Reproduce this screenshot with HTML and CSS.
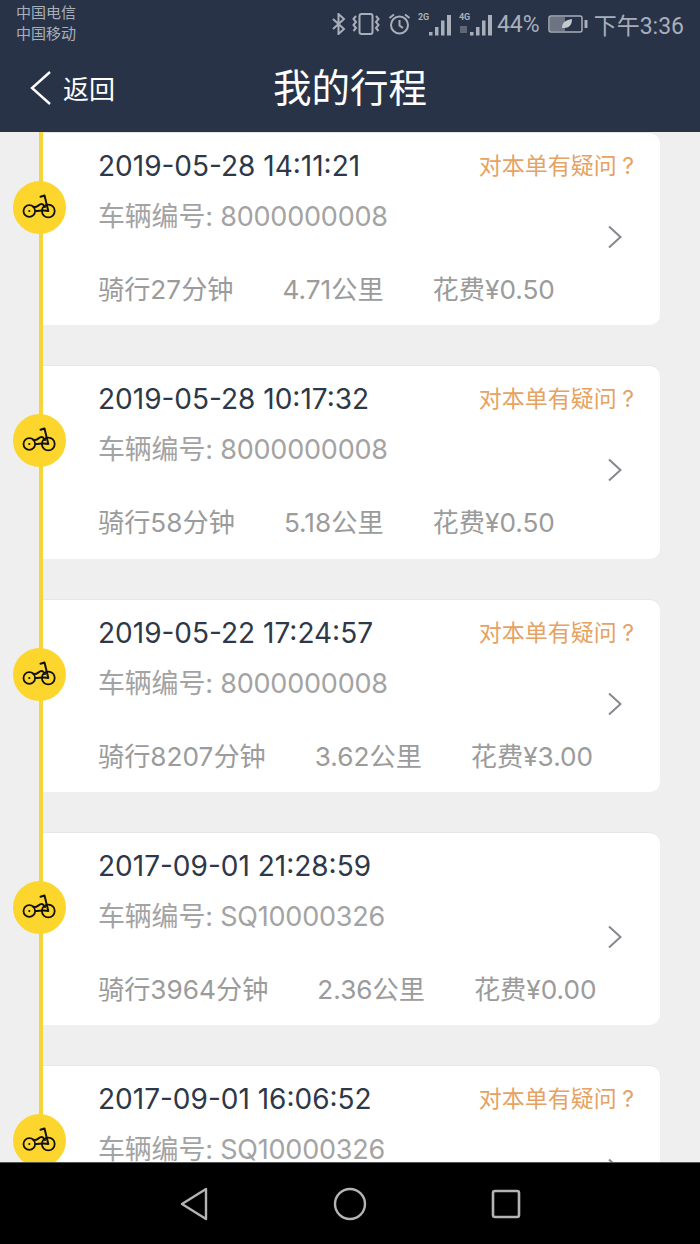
FILE: index.html
```html
<!DOCTYPE html>
<html lang="zh-CN">
<head>
<meta charset="utf-8">
<title>我的行程</title>
<link rel="stylesheet" href="styles.css">
</head>
<body>
<svg class="defs" width="0" height="0" aria-hidden="true">
  <symbol id="bike" viewBox="0 0 36 26">
    <circle cx="7.300" cy="18" r="5.800" fill="none" stroke="#111" stroke-width="1.800"/>
    <circle cx="7.300" cy="18" r="1.100" fill="#111"/>
    <circle cx="26.300" cy="18" r="6.400" fill="none" stroke="#111" stroke-width="1.800"/>
    <path d="M18.500 3.800 22.500 2.500 26.300 18M11 13.500c3.500 2.500 5.500-2.500 8.500-2.500 2 0 2.500 2 3.500 3M14 18c3 0 8-1.500 12.300 0" fill="none" stroke="#111" stroke-width="2" stroke-linecap="round" stroke-linejoin="round"/>
  </symbol>
  <symbol id="chev" viewBox="0 0 16 24">
    <path d="M2 1.500 13.500 12 2 22.500" fill="none" stroke="#85888d" stroke-width="2"/>
  </symbol>
</svg>
<div class="top">
  <div class="status">
    <div class="carriers"><span>中国电信</span><span>中国移动</span></div>
    <div class="sys">
      <svg class="ic-bt" width="14" height="22" viewBox="0 0 14 22"><path d="M1 6l11 10-5.500 5V1L12 6 1 16" fill="none" stroke="#a9afba" stroke-width="2"/></svg>
      <svg class="ic-vib" width="28" height="22" viewBox="0 0 28 22"><rect x="7.500" y="1" width="13" height="20" rx="2" fill="none" stroke="#a9afba" stroke-width="2"/><path d="M4 3 1.500 6 4 9 1.500 12 4 15 1.500 18M24 3l2.500 3L24 9l2.500 3L24 15l2.500 3" fill="none" stroke="#a9afba" stroke-width="2"/></svg>
      <svg class="ic-alarm" width="23" height="22" viewBox="0 0 23 22"><circle cx="11.500" cy="12" r="8.500" fill="none" stroke="#a9afba" stroke-width="2"/><path d="M11.500 7v5.500l3.500 2.500M1.500 5 6 1.500M21.500 5 17 1.500" fill="none" stroke="#a9afba" stroke-width="2"/></svg>
      <div class="sig"><span class="net">2G</span>
        <svg width="24" height="22" viewBox="0 0 24 22"><path d="M0 18h3.500v3.500H0zM6 13h3.500v8.500H6zM12 6.500h3.500v15H12zM18 1h4v20.500h-4z" fill="#a9afba"/></svg></div>
      <div class="sig sig-data"><span class="net">4G</span>
        <svg width="24" height="22" viewBox="0 0 24 22"><path d="M0 18h3.500v3.500H0zM6 13h3.500v8.500H6zM12 6.500h3.500v15H12zM18 1h4v20.500h-4z" fill="#a9afba"/></svg></div>
      <span class="pct">44%</span>
      <svg class="ic-bat" width="40" height="18" viewBox="0 0 40 18"><rect x="1" y="1" width="33" height="16" rx="2" fill="none" stroke="#a9afba" stroke-width="1.500"/><rect x="2" y="2" width="15" height="14" fill="#6d7482"/><path d="M14 13c0-6 4-8 10-9 0 6-3 9-8 9z" fill="#c4c8cf"/><rect x="36.500" y="5" width="3" height="8" fill="#a9afba"/></svg>
      <span class="clock">下午3:36</span>
    </div>
  </div>
  <div class="nav">
    <div class="back">
      <svg width="22" height="36" viewBox="0 0 22 36"><path d="M20 2 2 18l18 16" fill="none" stroke="#fff" stroke-width="2.400"/></svg>
      <span>返回</span>
    </div>
    <h1>我的行程</h1>
  </div>
</div>

<div class="list">
  <article class="card">
    <svg class="pin" width="36" height="26"><use href="#bike"/></svg>
    <div class="head"><span class="time">2019-05-28 14:11:21</span><span class="ask">对本单有疑问 ?</span></div>
    <div class="body">
      <div class="info">
        <div class="code">车辆编号: 8000000008</div>
        <div class="stats"><span>骑行27分钟</span><span>4.71公里</span><span>花费¥0.50</span></div>
      </div>
      <svg class="go" width="16" height="24"><use href="#chev"/></svg>
    </div>
  </article>
  <article class="card">
    <svg class="pin" width="36" height="26"><use href="#bike"/></svg>
    <div class="head"><span class="time">2019-05-28 10:17:32</span><span class="ask">对本单有疑问 ?</span></div>
    <div class="body">
      <div class="info">
        <div class="code">车辆编号: 8000000008</div>
        <div class="stats"><span>骑行58分钟</span><span>5.18公里</span><span>花费¥0.50</span></div>
      </div>
      <svg class="go" width="16" height="24"><use href="#chev"/></svg>
    </div>
  </article>
  <article class="card">
    <svg class="pin" width="36" height="26"><use href="#bike"/></svg>
    <div class="head"><span class="time">2019-05-22 17:24:57</span><span class="ask">对本单有疑问 ?</span></div>
    <div class="body">
      <div class="info">
        <div class="code">车辆编号: 8000000008</div>
        <div class="stats"><span>骑行8207分钟</span><span>3.62公里</span><span>花费¥3.00</span></div>
      </div>
      <svg class="go" width="16" height="24"><use href="#chev"/></svg>
    </div>
  </article>
  <article class="card">
    <svg class="pin" width="36" height="26"><use href="#bike"/></svg>
    <div class="head"><span class="time">2017-09-01 21:28:59</span></div>
    <div class="body">
      <div class="info">
        <div class="code">车辆编号: SQ10000326</div>
        <div class="stats"><span>骑行3964分钟</span><span>2.36公里</span><span>花费¥0.00</span></div>
      </div>
      <svg class="go" width="16" height="24"><use href="#chev"/></svg>
    </div>
  </article>
  <article class="card">
    <svg class="pin" width="36" height="26"><use href="#bike"/></svg>
    <div class="head"><span class="time">2017-09-01 16:06:52</span><span class="ask">对本单有疑问 ?</span></div>
    <div class="body">
      <div class="info">
        <div class="code">车辆编号: SQ10000326</div>
      </div>
      <svg class="go" width="16" height="24"><use href="#chev"/></svg>
    </div>
  </article>
</div>

<div class="sysnav">
  <svg width="30" height="34" viewBox="0 0 30 34"><path d="M27 2 3 17l24 15z" fill="none" stroke="#b4b4b4" stroke-width="2.400" stroke-linejoin="round"/></svg>
  <svg width="34" height="34" viewBox="0 0 34 34"><circle cx="17" cy="17" r="15" fill="none" stroke="#b4b4b4" stroke-width="2.400"/></svg>
  <svg width="30" height="30" viewBox="0 0 30 30"><rect x="2" y="2" width="26" height="26" rx="2" fill="none" stroke="#b4b4b4" stroke-width="2.600"/></svg>
</div>
</body>
</html>
```

FILE: styles.css
```css
* { box-sizing: border-box; }
html, body { margin: 0; height: 100%; }
body {
  width: 700px;
  height: 1244px;
  display: flex;
  flex-direction: column;
  overflow: hidden;
  background: #efefef;
  font-family: Inter, "Noto Sans CJK SC", sans-serif;
}
.defs { position: absolute; }

.top { height: 132px; background: #283347; flex: none; }
.status {
  height: 50px;
  padding: 3px 16px 0;
  display: flex;
  justify-content: space-between;
  color: #a9afba;
  font-family: Roboto, "Noto Sans CJK SC", sans-serif;
}
.carriers {
  display: flex;
  flex-direction: column;
  font-size: 15px;
  line-height: 21px;
}
.sys { display: flex; align-items: center; height: 42px; }
.ic-vib { margin-left: 6px; }
.ic-alarm { margin-left: 8px; }
.sig { display: flex; align-items: flex-end; margin-left: 7px; height: 24px; }
.sig-data { margin-left: 6px; }
.net { position: relative; font-size: 9px; line-height: 10px; font-weight: 700; width: 11px; align-self: flex-start; }
.sig-data .net::after {
  content: "";
  position: absolute;
  left: 1px;
  top: 14px;
  width: 7px;
  height: 7px;
  background: #5e6778;
}
.pct { font-size: 23px; margin-left: 3px; }
.ic-bat { margin-left: 8px; }
.clock { font-size: 23px; margin-left: 6px; }

.nav {
  position: relative;
  height: 82px;
  display: flex;
  align-items: center;
  justify-content: center;
}
.back {
  position: absolute;
  left: 30px;
  top: 19px;
  display: flex;
  align-items: center;
  gap: 11px;
  color: #fff;
  font-size: 26px;
}
.nav h1 { margin: 0; color: #fff; font-size: 38.500px; font-weight: 400; line-height: 1; position: relative; top: -3px; }

.list {
  position: relative;
  flex: 1;
  min-height: 0;
  overflow: hidden;
  padding: 1px 40px 0 43px;
  display: flex;
  flex-direction: column;
  gap: 41px;
}
.list::before {
  content: "";
  position: absolute;
  left: 39px;
  top: 0;
  bottom: 0;
  width: 4px;
  background: #f6d538;
}
.card {
  position: relative;
  flex: none;
  height: 192.250px;
  padding: 14px 25px 0 55px;
  background: #fff;
  border-radius: 0 10px 10px 0;
  box-shadow: 0 -1px 0 #e6e6e6;
}
.card::before {
  content: "";
  position: absolute;
  left: -30px;
  top: 48px;
  width: 53px;
  height: 53px;
  border-radius: 50%;
  background: #fcd52d;
}
.pin { position: absolute; left: -21px; top: 60px; }
.head { display: flex; justify-content: space-between; align-items: center; height: 38px; }
.time { font-size: 28px; color: #2e3848; }
.ask { font-size: 23px; word-spacing: -1px; color: #e5a263; margin: 0 1px 4px 0; }
.body { display: flex; justify-content: space-between; align-items: flex-start; }
.info { display: flex; flex-direction: column; }
.code { font-size: 27px; letter-spacing: -0.200px; line-height: 38px; margin-top: 13px; color: #a3a3a3; }
.stats { display: flex; gap: 49px; font-size: 26.200px; line-height: 38px; margin-top: 35px; color: #9b9b9b; }
.go { margin: 40px 12px 0 0; }

.sysnav {
  flex: none;
  height: 82px;
  background: #000;
  border-top: 1px solid #555;
  padding: 0 179px;
  display: flex;
  justify-content: space-between;
  align-items: center;
}
```
